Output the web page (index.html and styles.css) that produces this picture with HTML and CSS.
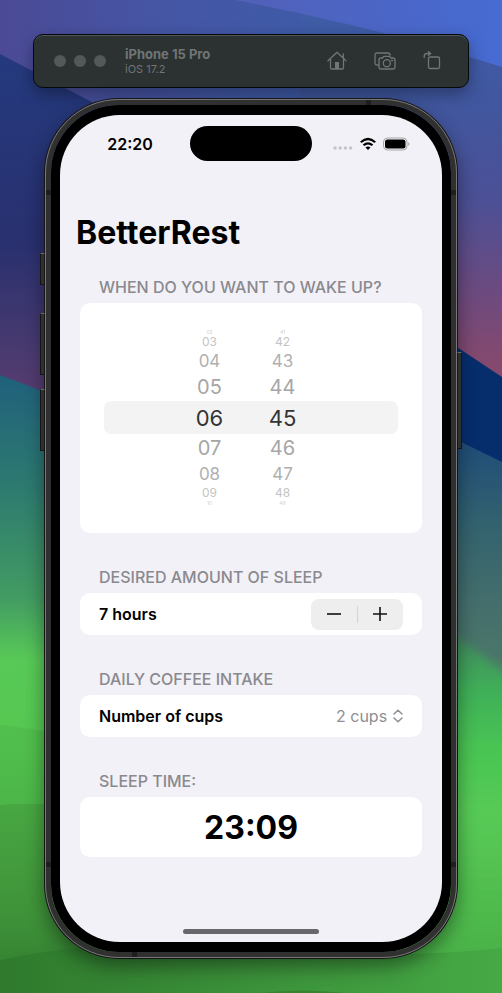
FILE: index.html
```html
<!DOCTYPE html>
<html lang="en">
<head>
<meta charset="utf-8">
<meta name="viewport" content="width=device-width, initial-scale=1">
<title>BetterRest</title>
<link rel="stylesheet" href="styles.css">
</head>
<body>
<svg class="wallpaper" viewBox="0 0 502 993" preserveAspectRatio="none" aria-hidden="true">
  <defs>
    <linearGradient id="sky" x1="0" y1="0" x2="0" y2="1">
      <stop offset="0" stop-color="#3f5da8"/><stop offset=".25" stop-color="#40579f"/><stop offset=".5" stop-color="#4c5096"/><stop offset=".7" stop-color="#684b82"/><stop offset=".9" stop-color="#84496f"/><stop offset="1" stop-color="#8f496c"/>
    </linearGradient>
    <linearGradient id="corner" x1="0" y1="0" x2="1" y2="0">
      <stop offset="0" stop-color="#4c4a96"/><stop offset=".5" stop-color="#4555a4"/><stop offset="1" stop-color="#3f5ba8"/>
    </linearGradient>
    <linearGradient id="bright" x1="0" y1="0" x2="1" y2="0">
      <stop offset="0" stop-color="#5260b8"/><stop offset="1" stop-color="#466bd2"/>
    </linearGradient>
    <linearGradient id="dusk" x1="0" y1="0" x2="0" y2="1">
      <stop offset="0" stop-color="#243a7e"/><stop offset=".5" stop-color="#29306f"/><stop offset=".75" stop-color="#44396f"/><stop offset="1" stop-color="#643e70"/>
    </linearGradient>
    <linearGradient id="meadow" x1="0" y1="375" x2="0" y2="993" gradientUnits="userSpaceOnUse">
      <stop offset="0" stop-color="#20607c"/><stop offset=".18" stop-color="#2d7a70"/><stop offset=".36" stop-color="#429b62"/><stop offset=".46" stop-color="#58c957"/><stop offset=".6" stop-color="#55c850"/><stop offset="1" stop-color="#3c963a"/>
    </linearGradient>
    <linearGradient id="east" x1="0" y1="440" x2="0" y2="680" gradientUnits="userSpaceOnUse">
      <stop offset="0" stop-color="#1f4c78"/><stop offset=".35" stop-color="#33626f"/><stop offset=".7" stop-color="#456f6c"/><stop offset="1" stop-color="#4c7a68"/>
    </linearGradient>
    <linearGradient id="slope" x1="0" y1="635" x2="0" y2="993" gradientUnits="userSpaceOnUse">
      <stop offset="0" stop-color="#3f8a5c"/><stop offset=".15" stop-color="#3fae59"/><stop offset=".32" stop-color="#49c552"/><stop offset=".5" stop-color="#57ca55"/><stop offset=".85" stop-color="#4cb54a"/><stop offset="1" stop-color="#45a743"/>
    </linearGradient>
    <linearGradient id="hill" x1="0" y1="800" x2="0" y2="993" gradientUnits="userSpaceOnUse">
      <stop offset="0" stop-color="#48a842"/><stop offset=".6" stop-color="#3f9239"/><stop offset="1" stop-color="#2f7a2e"/>
    </linearGradient>
    <linearGradient id="ground" x1="0" y1="0" x2="1" y2="0">
      <stop offset="0" stop-color="#2f7a2d"/><stop offset=".5" stop-color="#3b913a"/><stop offset="1" stop-color="#46a945"/>
    </linearGradient>
    <filter id="soft"><feGaussianBlur stdDeviation="5"/></filter>
  </defs>
  <rect width="502" height="400" fill="url(#sky)"/>
  <path d="M0 0H300V110H92L0 54Z" fill="url(#corner)"/>
  <path d="M235 0Q380 28 502 67V0Z" fill="url(#bright)"/>
  <path d="M0 54L92 102L160 130V430H0Z" fill="url(#dusk)"/>
  <path d="M380 296L502 377V480H380Z" fill="#062e6c"/>
  <path d="M0 375L45 392L251 470V993H0Z" fill="url(#meadow)"/>
  <path d="M251 340L457 440L502 462V993H251Z" fill="url(#east)"/>
  <path d="M400 600L457 638L530 690V1020H400Z" fill="url(#slope)" filter="url(#soft)"/>
  <path d="M0 725Q60 731 120 750V830H0Z" fill="#47ad45" opacity=".35"/>
  <path d="M0 805Q60 798 251 830V993H0Z" fill="url(#hill)"/>
  <path d="M0 960Q120 935 251 948T502 948V993H0Z" fill="url(#ground)"/>
  <path d="M260 993Q300 988 345 993Z" fill="#35852f"/>
</svg>

<main class="desktop">
  <header class="toolbar">
    <div class="lights"><span></span><span></span><span></span></div>
    <div class="device">
      <strong>iPhone 15 Pro</strong>
      <span>iOS 17.2</span>
    </div>
    <div class="tools">
      <button type="button" aria-label="Home">
        <svg width="20" height="20" viewBox="0 0 20 20"><path d="M1 9.800L10 1.300L19 9.800M3.500 8.200V16.700Q3.500 18 4.800 18H15.200Q16.500 18 16.500 16.700V8.200M16.300 6.500V3"/><path class="solid" d="M8 11H12V18H8Z"/></svg>
      </button>
      <button type="button" aria-label="Screenshot">
        <svg width="22" height="20" viewBox="0 0 22 20"><path d="M4.500 14H3Q1 14 1 12V4Q1 2 3 2H14Q16 2 16 4M7 7H8.500L10 5.300H15.500L17 7H19Q21 7 21 9V16Q21 18 19 18H7Q5 18 5 16V9Q5 7 7 7"/><circle cx="12.800" cy="12.200" r="3.500"/><path d="M17.500 9.500H18.500"/></svg>
      </button>
      <button type="button" aria-label="Rotate">
        <svg width="18" height="20" viewBox="0 0 18 20"><rect x="5.500" y="6" width="11" height="11.500" rx="1.500"/><path d="M1.200 6.500V5Q1.200 2.500 4 2.500H7.500M5.500 .7L7.700 2.500L5.500 4.300"/></svg>
      </button>
    </div>
  </header>

  <section class="phone" aria-label="iPhone 15 Pro">
    <i class="key action"></i><i class="key up"></i><i class="key down"></i><i class="key power"></i>
    <i class="band north"></i><i class="band south"></i>
    <i class="band west high"></i><i class="band east high"></i><i class="band west low"></i><i class="band east low"></i>
    <div class="screen">
      <div class="status">
        <time class="clock">22:20</time>
        <div class="island"></div>
        <div class="signals">
          <svg width="20" height="14" viewBox="0 0 20 14"><g fill="#c5c5c9"><circle cx="2" cy="11" r="1.700"/><circle cx="7.200" cy="11" r="1.700"/><circle cx="12.400" cy="11" r="1.700"/><circle cx="17.600" cy="11" r="1.700"/></g></svg>
          <svg width="16" height="14" viewBox="0 0 16 14"><g fill="none" stroke="#000" stroke-width="2.200"><path d="M.8 5.300Q8 -1.300 15.200 5.300"/><path d="M3.500 8.300Q8 4.300 12.500 8.300"/></g><path d="M5.500 10.400Q8 8.500 10.500 10.400L8 13Z"/></svg>
          <svg width="27" height="14" viewBox="0 0 27 14"><rect x=".5" y="1" width="23.500" height="12" rx="4" fill="none" stroke="#a5a5a9"/><rect x="2" y="2.500" width="20.500" height="9" rx="2.500"/><path d="M25.200 5.200Q26.500 5.700 26.500 7T25.200 8.800Z" fill="#a5a5a9"/></svg>
        </div>
      </div>

      <h1>BetterRest</h1>

      <section class="group first">
        <h2 id="wake">When do you want to wake up?</h2>
        <div class="card wheel" role="group" aria-labelledby="wake">
          <div class="row edge"><span>02</span><span>41</span></div>
          <div class="row far"><span>03</span><span>42</span></div>
          <div class="row mid"><span>04</span><span>43</span></div>
          <div class="row near"><span>05</span><span>44</span></div>
          <div class="row selected"><span>06</span><span>45</span></div>
          <div class="row near"><span>07</span><span>46</span></div>
          <div class="row mid"><span>08</span><span>47</span></div>
          <div class="row far"><span>09</span><span>48</span></div>
          <div class="row edge"><span>10</span><span>49</span></div>
        </div>
      </section>

      <section class="group">
        <h2>Desired amount of sleep</h2>
        <div class="card line">
          <span>7 hours</span>
          <div class="stepper">
            <button type="button" aria-label="Decrease"><svg width="16" height="16" viewBox="0 0 16 16"><path d="M1 8H15"/></svg></button>
            <button type="button" aria-label="Increase"><svg width="16" height="16" viewBox="0 0 16 16"><path d="M1 8H15M8 1V15"/></svg></button>
          </div>
        </div>
      </section>

      <section class="group">
        <h2>Daily coffee intake</h2>
        <div class="card line">
          <label for="cups">Number of cups</label>
          <div class="choice">
            <select id="cups"><option>1 cup</option><option selected>2 cups</option><option>3 cups</option></select>
            <svg width="10" height="14" viewBox="0 0 10 14" aria-hidden="true"><path d="M1 5L5 1.300L9 5M1 9L5 12.700L9 9"/></svg>
          </div>
        </div>
      </section>

      <section class="group">
        <h2>Sleep time:</h2>
        <div class="card result"><output>23:09</output></div>
      </section>

      <div class="home"></div>
    </div>
  </section>
</main>
</body>
</html>
```
FILE: styles.css
```css
* { box-sizing: border-box; }

body {
  margin: 0;
  min-height: 100vh;
  font-family: Inter, "Liberation Sans", sans-serif;
  font-size: 16px;
  background: #3c963a;
}

h1, h2 { margin: 0; }

button, select {
  margin: 0;
  padding: 0;
  border: 0;
  background: none;
  font: inherit;
  color: inherit;
}

svg { display: block; }

.wallpaper {
  position: absolute;
  inset: 0;
  width: 100%;
  height: 100%;
}

.desktop {
  position: relative;
  padding: 34px 33px;
}

.toolbar {
  display: flex;
  align-items: center;
  height: 54px;
  padding: 0 27px 0 20px;
  border: 1px solid #050808;
  border-radius: 10px;
  background: #2c3131;
  box-shadow: inset 0 1px 0 #505656, 0 6px 16px rgba(0, 0, 0, .35);
  color: #717575;
}

.lights { display: flex; gap: 8px; }

.lights span {
  width: 12px;
  height: 12px;
  border-radius: 50%;
  background: #535858;
}

.device {
  display: flex;
  flex-direction: column;
  margin-left: 19px;
  font-size: 11px;
  line-height: 14px;
}

.device strong { font-size: 13px; line-height: 15px; }

.tools {
  display: flex;
  align-items: center;
  gap: 27px;
  margin-left: auto;
}

.tools svg {
  fill: none;
  stroke: #717575;
  stroke-width: 1.3;
  stroke-linejoin: round;
  stroke-linecap: round;
}

.tools .solid { fill: #717575; stroke: none; }

.phone {
  position: relative;
  margin: 11px 12px 0;
  padding: 10px 9px;
  border: 6px solid #303030;
  border-radius: 74px;
  outline: 1px solid #777;
  outline-offset: -1px;
  background: #000;
  background-clip: padding-box;
  box-shadow: 0 0 0 1px #151515, 0 8px 20px rgba(0, 0, 0, .45);
}

.screen {
  display: flex;
  flex-direction: column;
  padding: 0 16px 8px;
  border-radius: 60px;
  background: #f2f1f7;
}

.key {
  position: absolute;
  width: 5px;
  border: 1px solid #151515;
  border-top-color: #666;
  background: #303030;
}

.action { left: -11px; top: 148px; height: 32px; }
.up { left: -11px; top: 208px; height: 62px; }
.down { left: -11px; top: 284px; height: 62px; }
.power { right: -11px; top: 247px; height: 97px; }

.band { position: absolute; width: 5px; height: 5px; background: #1e1e1e; }
.north { top: -5px; right: 80px; }
.south { bottom: -5px; left: 81px; }
.west { left: -5px; }
.east { right: -5px; }
.high { top: 85px; }
.low { bottom: 85px; }

.status {
  display: grid;
  grid-template-columns: 1fr 122px 1fr;
  align-items: center;
  height: 57px;
}

.clock {
  justify-self: center;
  padding-right: 6px;
  font-weight: 600;
}

.island {
  height: 35px;
  border-radius: 18px;
  background: #000;
}

.signals {
  display: flex;
  align-items: center;
  justify-content: flex-end;
  gap: 7px;
  padding-right: 16px;
}

h1 {
  margin-top: 41px;
  font-size: 32px;
  line-height: 40px;
  font-weight: 700;
}

.group { margin: 34px 4px 0; }
.group.first { margin-top: 24px; }

h2 {
  padding: 0 19px 6px;
  font-size: 16px;
  line-height: 20px;
  font-weight: 500;
  text-transform: uppercase;
  color: #8a898e;
}

.card {
  border-radius: 10px;
  background: #fff;
}

.wheel { padding: 26px 24px 27px; }

.row {
  display: grid;
  grid-template-columns: 73px 73px;
  align-items: center;
  justify-content: center;
  padding-right: 10px;
  text-align: center;
}

.selected {
  height: 33px;
  border-radius: 7px;
  background: #f3f3f3;
  font-size: 22px;
  color: #333;
}

.near { height: 28px; font-size: 20px; color: #a6a6a6; }
.mid { height: 24px; font-size: 17px; color: #b0b0b0; }
.far { height: 14px; font-size: 12px; line-height: 14px; color: #c4c4c4; }
.edge { height: 6px; font-size: 5px; line-height: 6px; color: #d0d0d0; }

.line {
  display: flex;
  align-items: center;
  justify-content: space-between;
  height: 42px;
  padding: 0 19px;
  font-weight: 600;
}

.stepper {
  display: flex;
  width: 92px;
  height: 31px;
  border-radius: 8px;
  background: #eee;
}

.stepper button {
  display: flex;
  flex: 1;
  align-items: center;
  justify-content: center;
  position: relative;
}

.stepper button + button::before {
  content: "";
  position: absolute;
  left: 0;
  top: 7px;
  bottom: 7px;
  width: 1px;
  background: #d4d4d4;
}

.stepper svg { fill: none; stroke: #111; stroke-width: 1.6; }

.choice {
  display: flex;
  align-items: center;
  gap: 5px;
  font-weight: 400;
  color: #8e8e92;
}

.choice select { appearance: none; }

.choice svg {
  fill: none;
  stroke: #8e8e92;
  stroke-width: 1.5;
  stroke-linecap: round;
  stroke-linejoin: round;
}

.result {
  display: flex;
  align-items: center;
  justify-content: center;
  height: 60px;
  font-size: 32px;
  font-weight: 700;
}

.home {
  align-self: center;
  width: 136px;
  height: 5px;
  margin-top: 72px;
  border-radius: 3px;
  background: #68676b;
}
```
